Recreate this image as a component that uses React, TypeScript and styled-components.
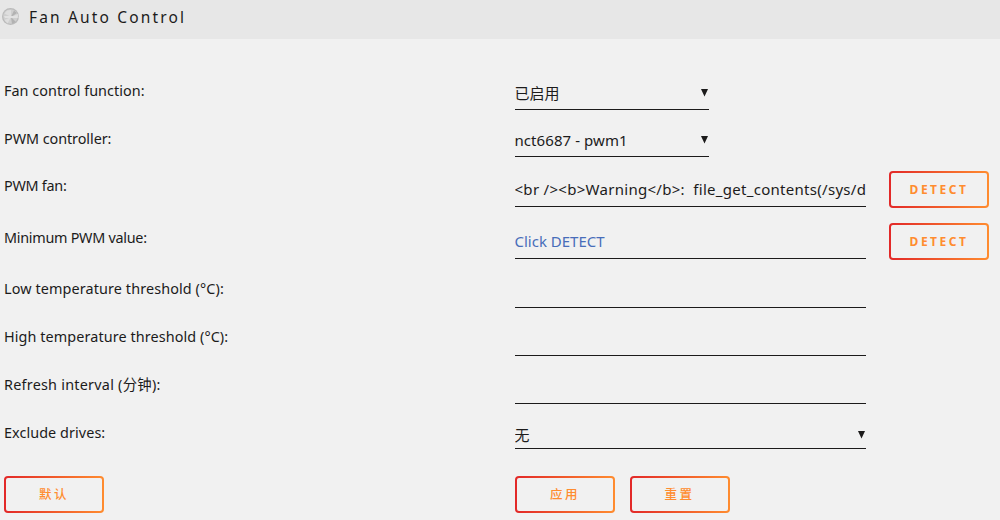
import React from 'react'
import styled, { createGlobalStyle } from 'styled-components'

const GlobalStyle = createGlobalStyle`
    * {
        box-sizing: border-box;
    }

    body {
        background-color: #f1f1f1;
        color: #1c1b1b;
        font-family: 'Noto Sans', 'Noto Sans CJK SC', sans-serif;
        font-size: 14.4px;
        margin: 0;
        overflow: hidden;
    }
`

const Page = styled.main`
    height: 520px;
    width: 1000px;
`

const TitleBar = styled.header`
    align-items: center;
    background-color: #e7e7e7;
    column-gap: 9px;
    display: flex;
    height: 39px;
    padding: 0 0 5px 2px;
`

const Title = styled.h1`
    font-size: 15.5px;
    font-weight: 400;
    letter-spacing: 2.15px;
    line-height: 20px;
    margin: 0;
`

const Form = styled.form`
    padding: 23px 0 0 4px;
`

const Row = styled.div<{ $height: number }>`
    align-items: end;
    display: grid;
    grid-template-columns: 511px 351px 100px;
    height: ${({ $height }) => $height}px;
`

const Label = styled.label<{ $bottom?: number; $tracking?: number }>`
    letter-spacing: ${({ $tracking = 0 }) => $tracking}px;
    line-height: 20px;
    padding-bottom: ${({ $bottom = 9 }) => $bottom}px;
    white-space: nowrap;
`

const Field = styled.div<{ $width?: number; $height?: number; $tracking?: number }>`
    border-bottom: 1px solid #1c1b1b;
    display: flex;
    font-size: 15px;
    height: ${({ $height = 31 }) => $height}px;
    justify-content: space-between;
    letter-spacing: ${({ $tracking = 0 }) => $tracking}px;
    line-height: 24px;
    margin-left: -0.5px;
    overflow: hidden;
    white-space: pre;
    width: ${({ $width = 351 }) => $width}px;
`

const Placeholder = styled.span`
    color: #486dba;
`

const Arrow = styled.svg`
    flex: none;
    height: 9px;
    margin-top: 7px;
    width: 9px;
`

const Button = styled.button`
    background: linear-gradient(#f1f1f1, #f1f1f1) padding-box,
        linear-gradient(90deg, #e22828 0%, #ff8c2f 100%) border-box;
    border: 2px solid transparent;
    border-radius: 4px;
    color: #ff8c2f;
    font-family: 'Noto Sans', 'Noto Sans CJK SC', sans-serif;
    font-size: 12px;
    font-weight: 700;
    height: 37px;
    letter-spacing: 2.5px;
    line-height: 16px;
    padding: 0;
    width: 100px;
`

const DetectButton = styled(Button)`
    margin: 0 0 -1px 23px;
`

const ActionButton = styled(Button)`
    font-size: 12.5px;
    font-weight: 500;
    padding-top: 1px;
`

const Actions = styled.div`
    display: grid;
    grid-template-columns: 511px 114.5px 100px;
    margin-top: 27px;
`

const FanIcon = () => (
    <svg width="18" height="18" viewBox="0 0 18 18">
        <circle cx="8.5" cy="8.5" r="8.5" fill="#bababa" />
        <circle cx="8.5" cy="8.5" r="7.3" fill="#cfcfcf" />
        <path d="M9 9 2.5 5.5 5 2.5 9 2ZM9 9l7-3 .5 4ZM9 9l-6.5 3 3 3.5Z" fill="#dedede" />
        <path d="M9 9 12 2.5 15 5ZM9 9l1 7 4-2Z" fill="#b2b2b2" />
        <path d="M2 8h13v2H3Z" fill="#e2e2e2" />
    </svg>
)

const Caret = () => (
    <Arrow viewBox="0 0 9 9">
        <path d="M1 1h7L4.5 8.5Z" fill="#1c1b1b" />
    </Arrow>
)

const App: React.FC = () => {
    return (
        <Page>
            <GlobalStyle />
            <TitleBar>
                <FanIcon />
                <Title>Fan Auto Control</Title>
            </TitleBar>
            <Form>
                <Row $height={48}>
                    <Label $tracking={0.04}>Fan control function:</Label>
                    <Field $width={194} $height={29}>
                        已启用
                        <Caret />
                    </Field>
                </Row>
                <Row $height={47}>
                    <Label $bottom={8} $tracking={-0.06}>
                        PWM controller:
                    </Label>
                    <Field $width={194} $height={29} $tracking={0.07}>
                        nct6687 - pwm1
                        <Caret />
                    </Field>
                </Row>
                <Row $height={50}>
                    <Label $bottom={11} $tracking={-0.27}>
                        PWM fan:
                    </Label>
                    <Field $height={30} $tracking={0.29}>
                        {'<br /><b>Warning</b>:  file_get_contents(/sys/d'}
                    </Field>
                    <DetectButton type="button">DETECT</DetectButton>
                </Row>
                <Row $height={52}>
                    <Label $bottom={11} $tracking={-0.28}>
                        Minimum PWM value:
                    </Label>
                    <Field $height={30}>
                        <Placeholder>Click DETECT</Placeholder>
                    </Field>
                    <DetectButton type="button">DETECT</DetectButton>
                </Row>
                <Row $height={49}>
                    <Label $tracking={0.11}>Low temperature threshold (°C):</Label>
                    <Field />
                </Row>
                <Row $height={48}>
                    <Label $tracking={0.09}>High temperature threshold (°C):</Label>
                    <Field />
                </Row>
                <Row $height={48}>
                    <Label $tracking={0.24}>Refresh interval (分钟):</Label>
                    <Field />
                </Row>
                <Row $height={45}>
                    <Label $bottom={6} $tracking={0.07}>
                        Exclude drives:
                    </Label>
                    <Field $height={26}>
                        无
                        <Caret />
                    </Field>
                </Row>
                <Actions>
                    <ActionButton type="button">默认</ActionButton>
                    <ActionButton type="button">应用</ActionButton>
                    <ActionButton type="button">重置</ActionButton>
                </Actions>
            </Form>
        </Page>
    )
}

export default App
